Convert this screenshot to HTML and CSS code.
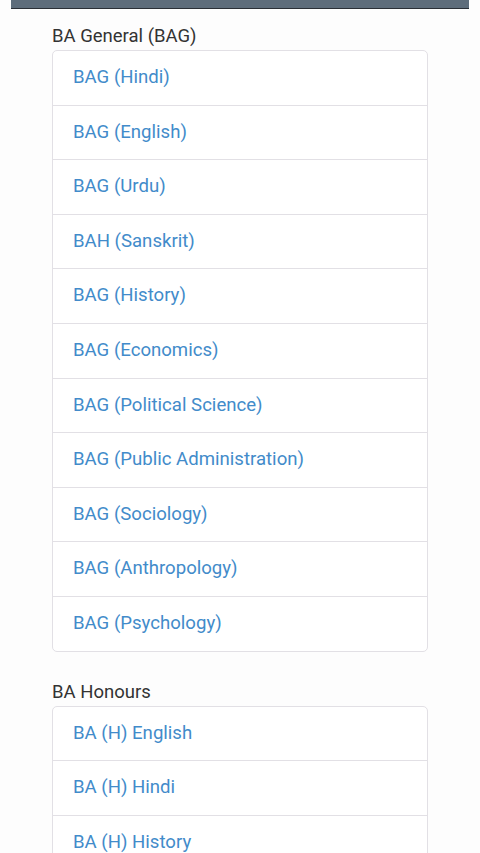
FILE: index.html
```html
<!DOCTYPE html>
<html>
<head>
<meta charset="utf-8">
<link rel="stylesheet" href="styles.css">
</head>
<body>
<div class="topbar"></div>
<main class="content">
  <section class="group">
    <h2 class="group-title">BA General (BAG)</h2>
    <ul class="list">
      <li class="item"><a href="#">BAG (Hindi)</a></li>
      <li class="item"><a href="#">BAG (English)</a></li>
      <li class="item"><a href="#">BAG (Urdu)</a></li>
      <li class="item"><a href="#">BAH (Sanskrit)</a></li>
      <li class="item"><a href="#">BAG (History)</a></li>
      <li class="item"><a href="#">BAG (Economics)</a></li>
      <li class="item"><a href="#">BAG (Political Science)</a></li>
      <li class="item"><a href="#">BAG (Public Administration)</a></li>
      <li class="item"><a href="#">BAG (Sociology)</a></li>
      <li class="item"><a href="#">BAG (Anthropology)</a></li>
      <li class="item"><a href="#">BAG (Psychology)</a></li>
    </ul>
  </section>
  <section class="group">
    <h2 class="group-title">BA Honours</h2>
    <ul class="list">
      <li class="item"><a href="#">BA (H) English</a></li>
      <li class="item"><a href="#">BA (H) Hindi</a></li>
      <li class="item"><a href="#">BA (H) History</a></li>
    </ul>
  </section>
</main>
</body>
</html>
```
FILE: styles.css
```css
html, body {
  margin: 0;
  padding: 0;
  background: #fdfdfd;
  font-family: Roboto, "Noto Sans", sans-serif;
  overflow: hidden;
}
.topbar {
  margin: 0 11px;
  height: 8px;
  background: #5e6d7b;
  border-bottom: 1px solid #2a2f36;
}
.content {
  padding: 16px 0 0 52px;
  width: 376px;
}
.group {
  margin-bottom: 29px;
}
.group-title {
  margin: 0 0 3px 0;
  font-size: 18.5px;
  line-height: 22px;
  font-weight: 400;
  color: #333333;
}
.list {
  list-style: none;
  margin: 0;
  padding: 0;
  border: 1px solid #e2e0e5;
  border-radius: 5px;
  background: #ffffff;
}
.item {
  padding: 14px 20px;
  line-height: 25.6px;
  font-size: 18.6px;
  border-bottom: 1px solid #e2e0e5;
}
.item:last-child {
  border-bottom: none;
}
.item a {
  color: #428bca;
  text-decoration: none;
}
```
